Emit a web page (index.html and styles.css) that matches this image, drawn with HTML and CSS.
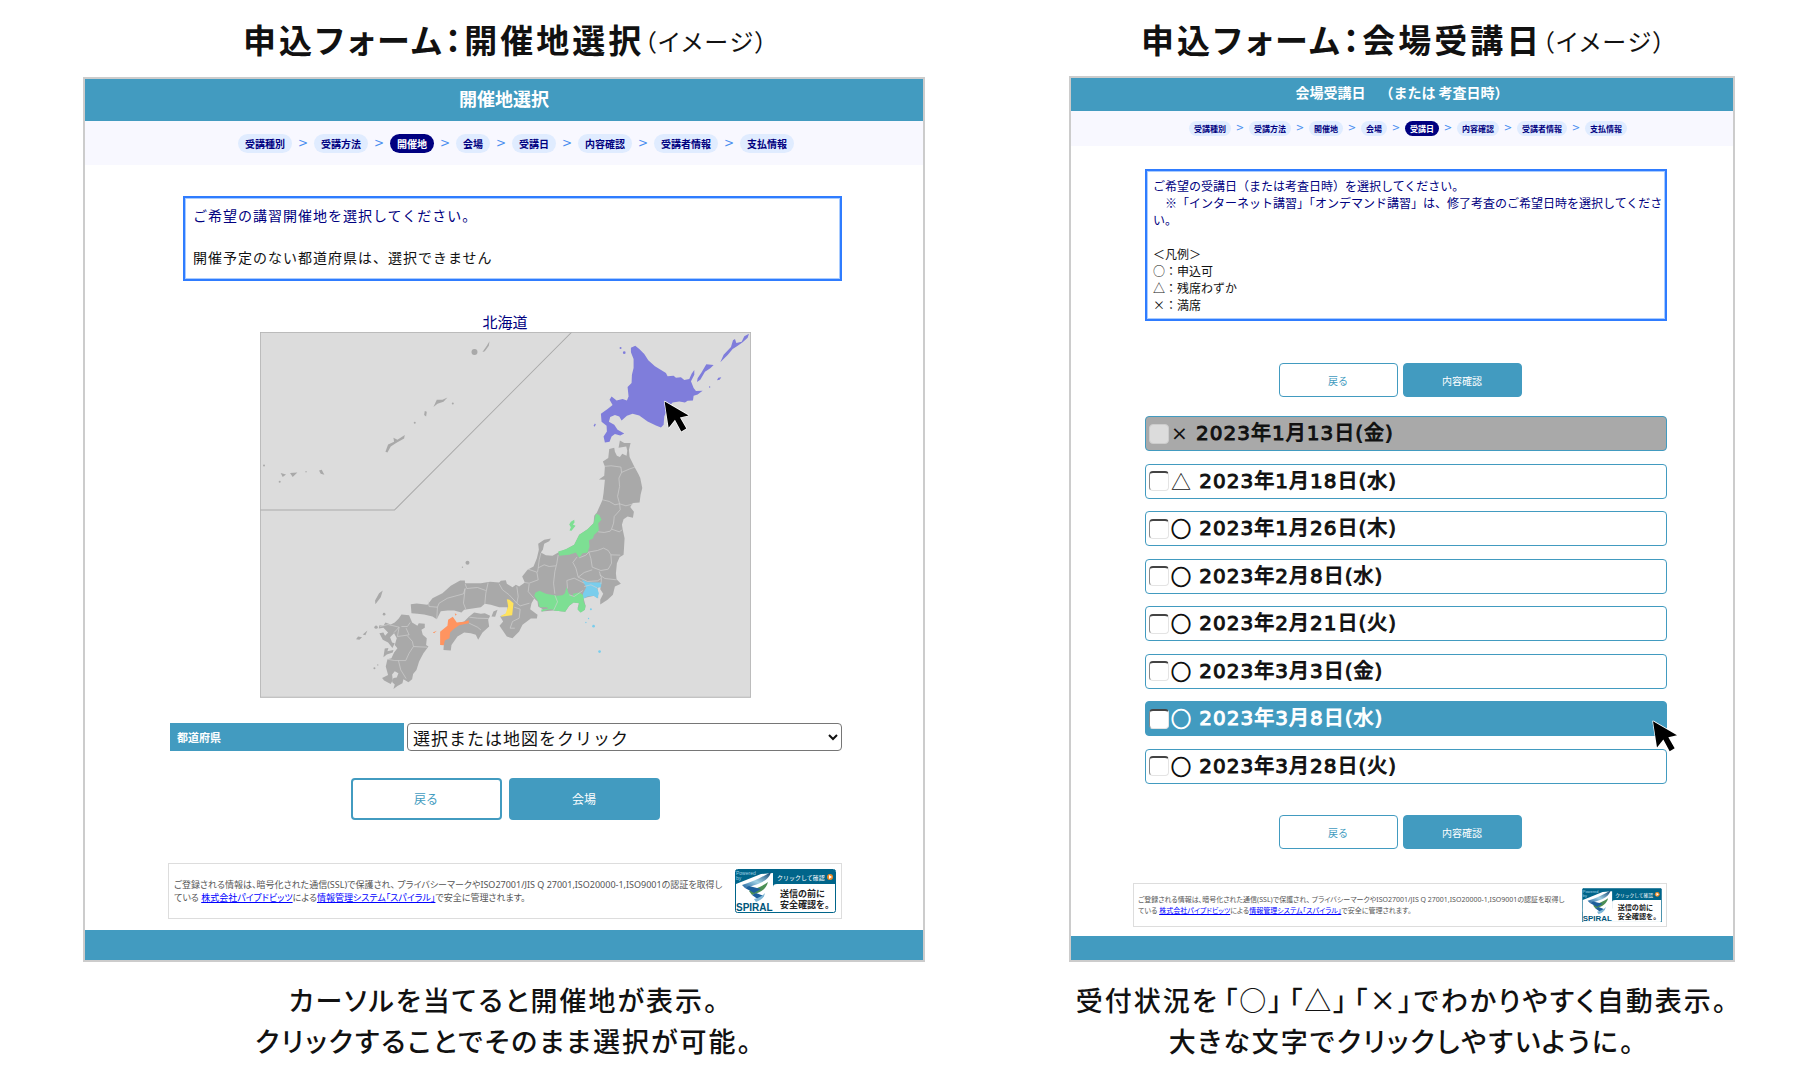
FILE: index.html
```html
<!DOCTYPE html>
<html lang="ja">
<head>
<meta charset="utf-8">
<title>申込フォーム</title>
<link rel="stylesheet" href="styles.css">
</head>
<body>
<svg class="defs" width="0" height="0" aria-hidden="true">
  <defs>
    <linearGradient id="spiral" x1="0" y1="1" x2="1" y2="0">
      <stop offset="0" stop-color="#1c5f9c"/><stop offset=".45" stop-color="#9fd0e4"/><stop offset="1" stop-color="#0c3f6e"/>
    </linearGradient>
    <symbol id="badge" viewBox="0 0 101 44">
      <rect x=".5" y=".5" width="100" height="43" rx="2" fill="#fff" stroke="#00658a"/>
      <path d="M1 1H100V15H42Q38 15 38 18V26H1Z" fill="#00658a"/>
      <path d="M1 15L26 5L38 4V30H1Z" fill="#fff"/>
      <path d="M36 3C34 10 29 14 10 19L7 16C18 13 27 8 36 3Z" fill="url(#spiral)"/>
      <path d="M33 13C31 20 27 23 17 26L14 22C22 19 28 17 33 13Z" fill="#4c8f55"/>
      <path d="M10 19L14 17L26 20L19 24Z" fill="#1c5f9c"/>
      <path d="M17 26L21 24L29 27L24 31Z" fill="#1c5f9c"/>
      <path d="M30 24C29 29 26 31 21 33L19 30C24 29 27 27 30 24Z" fill="#7fb7d6"/>
      <text x="1" y="6" class="b-tiny">Powered</text>
      <text x="1" y="11" class="b-tiny">by</text>
      <text x="1" y="42" class="b-name">SPIRAL</text>
      <text x="42" y="11" class="b-click">クリックして確認</text>
      <circle cx="95" cy="8" r="3" fill="#f08a24"/><path d="M94 6L97 8L94 10Z" fill="#fff"/>
      <text x="45" y="28" class="b-msg">送信の前に</text>
      <text x="45" y="39" class="b-msg">安全確認を。</text>
    </symbol>
    <symbol id="cursor" viewBox="0 0 78 98">
      <path d="M3 3L75 45L49 51L68 84L53 93L34 58L15 82Z" fill="#000" stroke="#fff" stroke-width="4" stroke-linejoin="round" paint-order="stroke"/>
    </symbol>
  </defs>
</svg>

<main class="page">
  <section class="sample">
    <h1 class="title">申込フォーム：開催地選択<span>（イメージ）</span></h1>
    <div class="panel">
      <header class="bar"><h2>開催地選択</h2></header>
      <ol class="steps">
        <li>受講種別</li><li>受講方法</li><li class="now">開催地</li><li>会場</li><li>受講日</li><li>内容確認</li><li>受講者情報</li><li>支払情報</li>
      </ol>
      <form class="body">
        <div class="notice">
          <p class="navy">ご希望の講習開催地を選択してください。</p>
          <p><br>開催予定のない都道府県は、選択できません</p>
        </div>
        <p class="hover-name">北海道</p>
        <svg class="map" viewBox="28 37 1472 1096" role="img" aria-label="日本地図">
          <rect x="28" y="37" width="1472" height="1096" fill="#dcdcdc"/>
          <path d="M28 571H431L963 37" fill="none" stroke="#a9a9a9" stroke-width="3"/>
          <g fill="#a9a9a9">
            <path d="M1075 388L1090 384L1092 396L1098 408L1107 412L1114 402L1127 408L1129 392L1126 380L1103 384L1107 362L1120 370L1139 370L1134 390L1136 412L1150 440L1162 462L1168 475L1174 505L1169 525L1166 548L1146 550L1138 562L1149 576L1146 594L1130 590L1118 598L1113 615L1116 632L1121 655L1119 690L1118 705L1106 712L1098 730L1095 760L1097 778L1110 792L1092 800L1086 825L1070 840L1048 854L1048 840L1057 822L1048 808L1050 793L1040 805L1042 835L1030 828L1010 832L998 835L1004 858L1002 870L988 878L980 865L984 850L968 848L955 858L943 876L908 872L870 875L876 868L862 860L860 845L850 836L842 850L838 868L860 885L858 896L840 896L815 915L805 935L785 955L768 950L746 918L757 905L748 890L768 880L770 862L745 862L720 855L702 852L690 862L665 866L640 870L632 878L610 872L590 872L570 874L558 898L545 890L520 884L500 882L482 880L480 853L498 851L530 855L545 835L575 820L600 798L628 782L642 782L643 790L690 790L718 786L745 788L750 783L765 781L768 792L785 802L795 795L805 800L822 788L814 770L830 750L848 740L858 715L864 690L862 672L880 660L900 656L895 664L880 672L876 690L870 698L885 706L905 708L922 698L945 688L970 675L985 645L1010 628L1028 610L1030 588L1038 578L1055 540L1058 520L1062 480L1044 479L1060 468L1062 440L1056 425L1072 415Z"/>
            <path d="M655 890L670 878L690 882L702 880L718 888L712 900L715 920L695 938L682 960L675 945L660 940L640 938L620 950L602 975L600 992L578 990L580 960L600 915L640 905Z"/>
            <path d="M722 890L728 875L740 870L733 891ZM385 820L396 812L390 832L374 853L373 842ZM316 958L322 950L334 952L326 960ZM336 944L350 932L344 946Z"/>
            <path d="M420 914L432 908L444 896L452 884L475 886L484 908L500 918L504 910L522 912L522 924L512 930L516 945L528 955L526 975L533 980L518 1000L505 1025L497 1050L487 1062L484 1078L473 1087L458 1078L455 1090L440 1098L428 1107L432 1094L424 1086L428 1074L438 1073L443 1060L432 1054L424 1064L426 1080L420 1092L400 1082L394 1074L412 1065L405 1040L410 1018L422 1015L430 998L440 985L432 975L438 955L430 940L418 952L424 968L432 970L425 984L412 968L396 960L386 940L398 938L403 948L412 938L398 924L384 926L386 916L398 918L404 908Z"/>
            <path d="M402 986L413 984L410 994L428 990L426 998L408 1004L398 1012Z"/>
            <path d="M695 97L708 78L716 65L714 78L702 95ZM548 262L558 240L575 240L590 233L578 246L560 252ZM522 274L528 276L526 290L520 286ZM404 396L412 374L430 366L428 354L440 360L462 346L460 356L436 370L420 380L410 398ZM90 460L106 464L96 472ZM118 460L140 458L126 472ZM205 452L213 450L221 465L210 462Z"/>
            <circle cx="671" cy="97" r="9"/><circle cx="650" cy="729" r="6"/><circle cx="400" cy="883" r="4"/><circle cx="606" cy="251" r="3"/><circle cx="492" cy="309" r="3"/><circle cx="40" cy="437" r="3"/><circle cx="87" cy="486" r="3"/><circle cx="166" cy="456" r="2"/><circle cx="371" cy="1045" r="3"/><circle cx="381" cy="1035" r="2"/><circle cx="635" cy="742" r="2"/><circle cx="376" cy="922" r="5"/>
          </g>
          <g fill="#7f7ddb">
            <path d="M1140 84L1153 78L1165 88L1180 103L1192 122L1212 140L1245 160L1250 170L1268 168L1275 174L1290 173L1300 181L1315 178L1322 162L1330 151L1330 165L1320 185L1328 205L1335 214L1355 213L1340 224L1328 228L1326 242L1310 243L1302 248L1285 245L1265 248L1250 265L1240 290L1238 315L1230 323L1215 317L1190 305L1165 287L1145 282L1128 288L1112 302L1105 290L1092 286L1078 292L1074 306L1090 315L1100 330L1120 341L1108 347L1092 343L1082 350L1076 366L1062 368L1058 350L1068 335L1067 318L1052 306L1050 282L1070 268L1085 256L1076 240L1082 230L1097 242L1115 238L1128 242L1133 230L1130 202L1142 190L1143 165L1148 145L1148 118L1140 98Z"/>
            <path d="M1408 128L1418 105L1440 82L1446 62L1452 58L1456 70L1472 66L1480 50L1494 42L1490 54L1475 68L1458 80L1445 88L1430 106ZM1338 187L1340 176L1352 158L1366 134L1388 136L1378 146L1362 156L1348 180ZM1398 182L1402 174L1411 173L1406 180Z"/>
            <circle cx="1376" cy="202" r="2"/><circle cx="1109" cy="85" r="3"/><circle cx="1120" cy="99" r="4"/><path d="M1028 318L1032 311L1035 314L1031 321Z"/>
          </g>
          <path fill="#7ddf93" d="M1035 582L1045 586L1052 600L1042 610L1044 632L1030 645L1026 656L1014 662L1016 680L1010 698L995 700L985 714L975 698L955 705L925 708L922 695L945 688L970 675L985 645L1010 628L1028 610ZM960 606L970 600L971 608L966 614L974 618L962 633L956 632L960 622L955 614Z"/>
          <path fill="#7ddf93" d="M850 828L854 818L866 813L885 822L918 828L935 826L942 820L947 802L953 820L968 832L966 822L985 818L1000 828L998 845L1004 858L1002 870L990 878L980 870L985 850L968 848L955 858L943 876L908 872L904 868L890 870L874 875L870 870L892 866L888 862L866 862L862 845Z"/>
          <path fill="#79cdec" d="M993 780L1010 787L1052 788L1050 802L1038 804L1044 820L1040 836L1028 828L1010 830L998 837L996 822L1006 802Z"/>
          <g fill="#79cdec"><circle cx="1020" cy="868" r="3"/><circle cx="1028" cy="919" r="4"/><circle cx="1046" cy="995" r="4"/><circle cx="1005" cy="908" r="2"/><circle cx="1013" cy="896" r="2"/></g>
          <path fill="#ffe35c" d="M768 838L776 840L788 850L784 886L750 891L752 887L764 882L772 860Z"/>
          <path fill="#ff9460" d="M568 936L590 918L592 900L606 891L618 908L640 906L654 901L654 910L625 916L608 928L598 938L596 955L582 962L579 976L568 975ZM546 938L558 933L550 940ZM612 880L618 884L614 888Z"/>
          <g fill="none" stroke="#d0d0d0" stroke-width="2" stroke-linejoin="round">
            <path d="M1060 440L1080 438L1110 442L1112 458L1135 448L1152 442M1112 458L1104 475L1106 500L1100 530L1106 552M1055 540L1075 545L1092 555L1106 552L1125 558L1148 552M1106 552L1108 570L1090 590L1088 610L1082 628L1105 636L1114 630M1042 636L1060 638L1078 634L1082 628"/>
            <path d="M1012 697L1040 692L1058 685L1072 692L1080 705L1108 706M1080 705L1082 730L1072 748L1050 752L1024 742L1020 716L1014 697L1005 706L985 714M978 712L966 728L975 745L982 772L1000 758L1024 750M982 772L1010 785L1040 783L1052 775L1045 755M1046 765L1062 776L1097 780M922 705L918 730L912 755L908 790L912 822M862 744L880 735L895 740L915 738M870 700L865 720L862 745L860 757M832 748L858 757L862 780L835 790L822 788M835 792L832 815L850 836M1052 776L1050 793M948 782L970 775L1000 790M948 782L950 806M955 825L970 830L996 812M912 826L920 846L908 872"/>
            <path d="M798 800L802 830L798 850L808 858L836 850M745 792L755 810L775 825L798 850M712 788L705 820L702 852M643 792L648 806L680 803L705 812M643 806L638 850L645 868M560 862L565 850L590 835L638 822L643 806M532 842L535 860L560 862L558 898M790 862L808 868L805 895L785 905L778 925L792 925M655 910L680 922L690 930M656 892L680 895L714 896M1000 800L1020 795L1040 805"/>
            <path d="M388 920L412 914L445 922L430 938M452 920L470 920L478 908M445 922L440 950L475 945L466 925M470 948L485 965L488 980L530 982M488 980L475 1000L465 1022L432 1022L410 1018M443 1022L450 1050L466 1076"/>
          </g>
          <rect x="29" y="38" width="1470" height="1094" fill="none" stroke="#b5b5b5" stroke-width="3"/>
          <use href="#cursor" x="1238" y="242" width="78" height="98"/>
        </svg>
        <div class="field">
          <label for="pref">都道府県</label>
          <select id="pref"><option>選択または地図をクリック</option></select>
        </div>
        <div class="actions">
          <button type="button">戻る</button><button type="button" class="primary">会場</button>
        </div>
        <div class="ssl">
          <p>ご登録される情報は、暗号化された通信(SSL)で保護され、 プライバシーマークやISO27001/JIS Q 27001,ISO20000-1,ISO9001の認証を取得し<br>ている <a href="#">株式会社パイプドビッツ</a>による<a href="#">情報管理システム「スパイラル」</a>で安全に管理されます。</p>
          <a class="seal" href="#" aria-label="SPIRAL"><svg viewBox="0 0 101 44"><use href="#badge"/></svg></a>
        </div>
      </form>
      <footer class="foot"></footer>
    </div>
    <p class="caption">カーソルを当てると開催地が表示。<br>クリックすることでそのまま選択が可能。</p>
  </section>

  <section class="sample small">
    <h1 class="title">申込フォーム：会場受講日<span>（イメージ）</span></h1>
    <div class="panel">
      <header class="bar"><h2>会場受講日　（または 考査日時）</h2></header>
      <ol class="steps">
        <li>受講種別</li><li>受講方法</li><li>開催地</li><li>会場</li><li class="now">受講日</li><li>内容確認</li><li>受講者情報</li><li>支払情報</li>
      </ol>
      <form class="body">
        <div class="notice">
          <p class="navy">ご希望の受講日（または考査日時）を選択してください。<br>　※「インターネット講習」「オンデマンド講習」は、修了考査のご希望日時を選択してください。</p>
          <p><br>＜凡例＞<br>○：申込可<br>△：残席わずか<br>×：満席</p>
        </div>
        <div class="actions">
          <button type="button">戻る</button><button type="button" class="primary">内容確認</button>
        </div>
        <div class="dates">
          <label class="full"><input type="checkbox" disabled><span class="cross">×</span> 2023年1月13日(金)</label>
          <label><input type="checkbox"><span class="few">△</span> 2023年1月18日(水)</label>
          <label><input type="checkbox"><span>○</span> 2023年1月26日(木)</label>
          <label><input type="checkbox"><span>○</span> 2023年2月8日(水)</label>
          <label><input type="checkbox"><span>○</span> 2023年2月21日(火)</label>
          <label><input type="checkbox"><span>○</span> 2023年3月3日(金)</label>
          <label class="hover"><input type="checkbox"><span>○</span> 2023年3月8日(水)<svg class="pointer" viewBox="0 0 78 98" aria-hidden="true"><use href="#cursor"/></svg></label>
          <label><input type="checkbox"><span>○</span> 2023年3月28日(火)</label>
        </div>
        <div class="actions">
          <button type="button">戻る</button><button type="button" class="primary">内容確認</button>
        </div>
        <div class="ssl">
          <p>ご登録される情報は、暗号化された通信(SSL)で保護され、 プライバシーマークやISO27001/JIS Q 27001,ISO20000-1,ISO9001の認証を取得し<br>ている <a href="#">株式会社パイプドビッツ</a>による<a href="#">情報管理システム「スパイラル」</a>で安全に管理されます。</p>
          <a class="seal" href="#" aria-label="SPIRAL"><svg viewBox="0 0 101 44"><use href="#badge"/></svg></a>
        </div>
      </form>
      <footer class="foot"></footer>
    </div>
    <p class="caption">受付状況を<span>「○」</span><span>「△」</span><span>「×」</span>でわかりやすく自動表示。<br>大きな文字でクリックしやすいように。</p>
  </section>
</main>
</body>
</html>
```
FILE: styles.css
```css
* { box-sizing: border-box; }
body {
  margin: 0;
  background: #fff;
  color: #111;
  font-family: "Noto Sans CJK JP", sans-serif;
}
h1, h2, p, ol { margin: 0; padding: 0; }
.defs { position: absolute; }

.page {
  display: grid;
  grid-template-columns: minmax(0, 842fr) minmax(0, 666fr);
  gap: 144px;
  padding: 0 85px 0 83px;
}

.title {
  display: flex;
  justify-content: center;
  align-items: center;
  padding: 15px 0 13px 4px;
  font-size: 33px;
  line-height: 49px;
  font-weight: 700;
  letter-spacing: 3px;
  font-feature-settings: "palt";
  white-space: nowrap;
}
.title span { padding-top: 2px; line-height: 47px; font-size: 24px; font-weight: 400; letter-spacing: 2px; }

.panel { border: 2px solid #ccc; }
.bar { background: #429bc0; color: #fff; text-align: center; }
.bar h2 {
  padding-bottom: 4px;
  font-size: 18px;
  line-height: 38px;
  font-weight: 700;
  text-spacing-trim: space-all;
}

.steps {
  display: flex;
  justify-content: center;
  align-items: center;
  height: 44px;
  padding-left: 24px;
  background: #f8f8ff;
  list-style: none;
  font-size: 10px;
  font-weight: 700;
  color: navy;
}
.steps li {
  position: relative;
  padding: 0 7px;
  border-radius: 10px;
  background: #e0ecff;
  line-height: 19px;
  white-space: nowrap;
}
.steps li + li { margin-left: 22px; }
.steps li + li::before {
  content: ">";
  position: absolute;
  left: -22px;
  width: 22px;
  text-align: center;
  color: #4a8ff0;
  font: 12px/18px "DejaVu Sans", sans-serif;
}
.steps .now { background: navy; color: #fff; }

.body { padding: 31px 81px 11px 83px; }
.notice {
  margin-left: 15px;
  padding: 7px 8px 11px;
  border: 2px solid #2f7cff;
  box-shadow: inset 0 0 0 1px #a9ccff;
  font-size: 14px;
  line-height: 21px;
  letter-spacing: 1px;
}
.navy, .hover-name { color: navy; }
.hover-name { padding-top: 30px; font-size: 15px; line-height: 21px; text-align: center; }
.map { display: block; width: 491px; max-width: 100%; margin: 0 auto; }

.field { display: grid; grid-template-columns: 234px 1fr; gap: 3px; margin: 25px 0 27px 2px; }
.field label {
  padding-left: 7px;
  background: #429bc0;
  color: #fff;
  font-size: 11px;
  line-height: 28px;
  font-weight: 700;
}
.field select {
  width: 100%;
  height: 28px;
  padding: 0 0 0 1px;
  border: 1px solid #767676;
  border-radius: 4px;
  background: #fff;
  color: #111;
  font: 17px/26px "Noto Sans CJK JP", sans-serif;
  letter-spacing: 1px;
}

.actions { display: flex; justify-content: center; gap: 7px; }
.actions button {
  width: 151px;
  height: 42px;
  border: 2px solid #429bc0;
  border-radius: 4px;
  background: #fff;
  color: #429bc0;
  font: 12px "Noto Sans CJK JP", sans-serif;
}
.actions .primary { background: #429bc0; color: #fff; }

.ssl {
  display: flex;
  justify-content: space-between;
  align-items: center;
  height: 56px;
  margin-top: 43px;
  padding: 0 5px;
  border: 1px solid #ddd;
  color: #555;
  font: 9px/13px "Noto Sans", "Noto Sans CJK JP", sans-serif;
  font-feature-settings: "palt";
}
.ssl p { white-space: nowrap; }
.ssl a { color: #00f; }
.seal { width: 101px; }
.seal svg { display: block; width: 100%; }
.b-tiny { font: 5px "Liberation Sans", sans-serif; fill: #9fd0e4; }
.b-name { font: 700 10px "Liberation Sans", sans-serif; fill: #00557a; }
.b-click { font: 6px "Noto Sans CJK JP", sans-serif; fill: #fff; }
.b-msg { font: 700 9px "Noto Sans CJK JP", sans-serif; fill: #222; }

.foot { height: 30px; background: #429bc0; }

.caption {
  padding-top: 17px;
  font-size: 27px;
  line-height: 41px;
  letter-spacing: 2px;
  font-weight: 500;
  font-feature-settings: "palt";
  text-align: center;
  white-space: nowrap;
}
.caption span { margin-left: 5px; }

/* second form, drawn at a smaller scale */
.small .title { padding-bottom: 12px; }
.small .bar h2 { font-size: 14px; line-height: 29px; }
.small .steps { height: 35px; padding-left: 12px; font-size: 8px; }
.small .steps li { padding: 0 5px; line-height: 15px; }
.small .steps li + li { margin-left: 18px; }
.small .steps li + li::before { left: -18px; width: 18px; font-size: 10px; line-height: 14px; }
.small .body { padding: 23px 66px 9px 62px; }
.small .notice {
  margin-left: 12px;
  padding: 6px 0 6px 6px;
  font-size: 12px;
  line-height: 17px;
  letter-spacing: 0;
}
.small .actions { gap: 5px; margin-top: 42px; }
.small .actions button { width: 119px; height: 34px; font-size: 10px; border-width: 1px; }

.dates {
  display: flex;
  flex-direction: column;
  justify-content: space-between;
  min-height: 368px;
  margin: 19px 0 -11px 12px;
}
.dates label {
  position: relative;
  display: flex;
  align-items: center;
  height: 35px;
  padding-left: 3px;
  border: 1px solid #429bc0;
  border-radius: 4px;
  font: 20px/33px "DejaVu Sans", "Noto Sans CJK JP", sans-serif;
  letter-spacing: 1px;
  white-space: pre;
  -webkit-text-stroke: 1px currentColor;
}
.dates span { font-family: "Noto Sans CJK JP", sans-serif; }
.dates .few { -webkit-text-stroke: 0; }
.dates .cross { font-family: "DejaVu Sans", sans-serif; -webkit-text-stroke: 0; }
.dates input {
  appearance: none;
  width: 20px;
  height: 20px;
  margin: 0 2px 0 0;
  border: 1px solid #e4e4e4;
  border-top: 2px solid #444;
  border-left-color: #888;
  border-radius: 4px;
  background: #fff;
}
.dates .full { background: #a9a9a9; }
.dates .full input { border: 1px solid #ccc; background: #dcdcdc; }
.dates .hover { background: #429bc0; color: #fff; }
.pointer { position: absolute; z-index: 1; right: -12px; top: 18px; width: 26px; height: 33px; }

.small .ssl { height: 44px; margin-top: 34px; padding: 0 4px; font-size: 7px; line-height: 11px; }
.small .seal { width: 80px; }
.small .foot { height: 24px; }
```
